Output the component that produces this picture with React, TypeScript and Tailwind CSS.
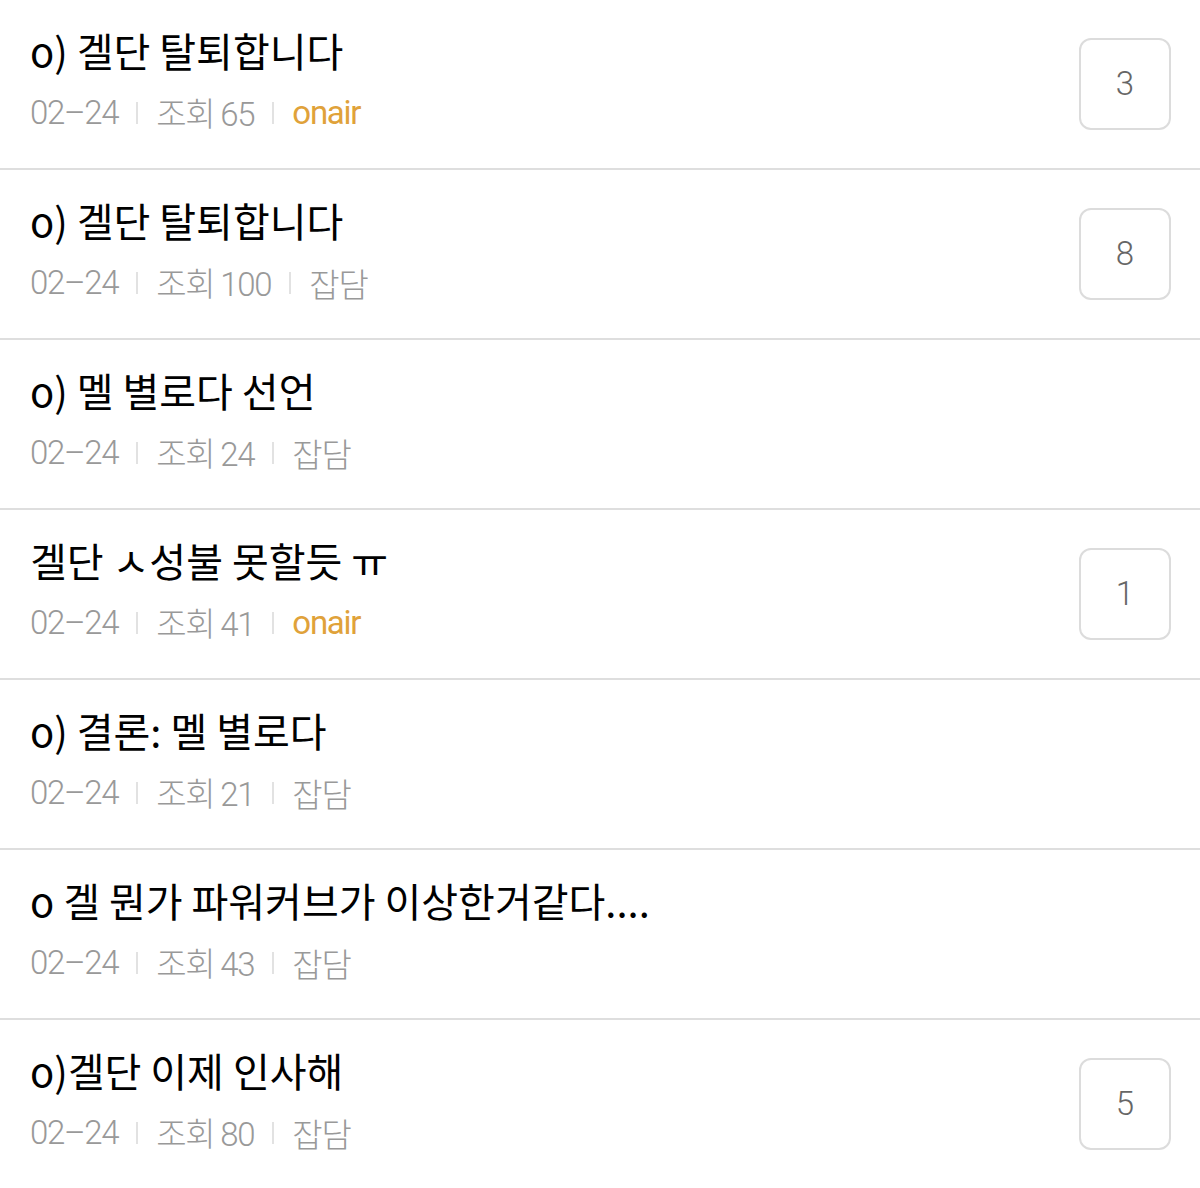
import React from 'react';

type Post = { title: string; views: number; tag: string; comments?: number };

const posts: Post[] = [
  { title: 'o) 겔단 탈퇴합니다', views: 65, tag: 'onair', comments: 3 },
  { title: 'o) 겔단 탈퇴합니다', views: 100, tag: '잡담', comments: 8 },
  { title: 'o) 멜 별로다 선언', views: 24, tag: '잡담' },
  { title: '겔단 ㅅ성불 못할듯 ㅠ', views: 41, tag: 'onair', comments: 1 },
  { title: 'o) 결론: 멜 별로다', views: 21, tag: '잡담' },
  { title: 'o 겔 뭔가 파워커브가 이상한거같다....', views: 43, tag: '잡담' },
  { title: 'o)겔단 이제 인사해', views: 80, tag: '잡담', comments: 5 },
];

const Sep = () => <span className="mx-[18px] inline-block h-[22px] w-[2px] bg-[#e2e2e2]" />;

const Row = ({ post }: { post: Post }) => (
  <li className="flex h-[170px] items-center justify-between border-b-2 border-[#dedede] pl-[30px] pr-[29px]">
    <div className="flex flex-col pb-[8px]">
      <div className="text-[40px] leading-[48px] text-black" style={{ fontFamily: '"Noto Sans CJK KR", sans-serif' }}>
        {post.title}
      </div>
      <div className="mt-[18px] flex items-center text-[33px] leading-[40px] tracking-[-1.3px] text-[#999]">
        <span className="font-[Roboto] font-light">02–24</span>
        <Sep />
        <span className="font-['Noto_Sans_CJK_KR'] font-light">조회 <span className="font-[Roboto]">{post.views}</span></span>
        <Sep />
        <span className={post.tag === 'onair' ? 'font-[Roboto] text-[#e0a23a]' : "font-['Noto_Sans_CJK_KR'] font-light"}>
          {post.tag}
        </span>
      </div>
    </div>
    {post.comments !== undefined && (
      <div className="flex h-[92px] w-[92px] items-center justify-center rounded-[12px] border-2 border-[#dcdcdc] font-[Roboto] text-[33px] font-light text-[#666]">
        {post.comments}
      </div>
    )}
  </li>
);

export default function App() {
  return (
    <div className="min-h-screen bg-white">
      <ul>
        {posts.map((p, i) => (
          <Row key={i} post={p} />
        ))}
      </ul>
    </div>
  );
}
